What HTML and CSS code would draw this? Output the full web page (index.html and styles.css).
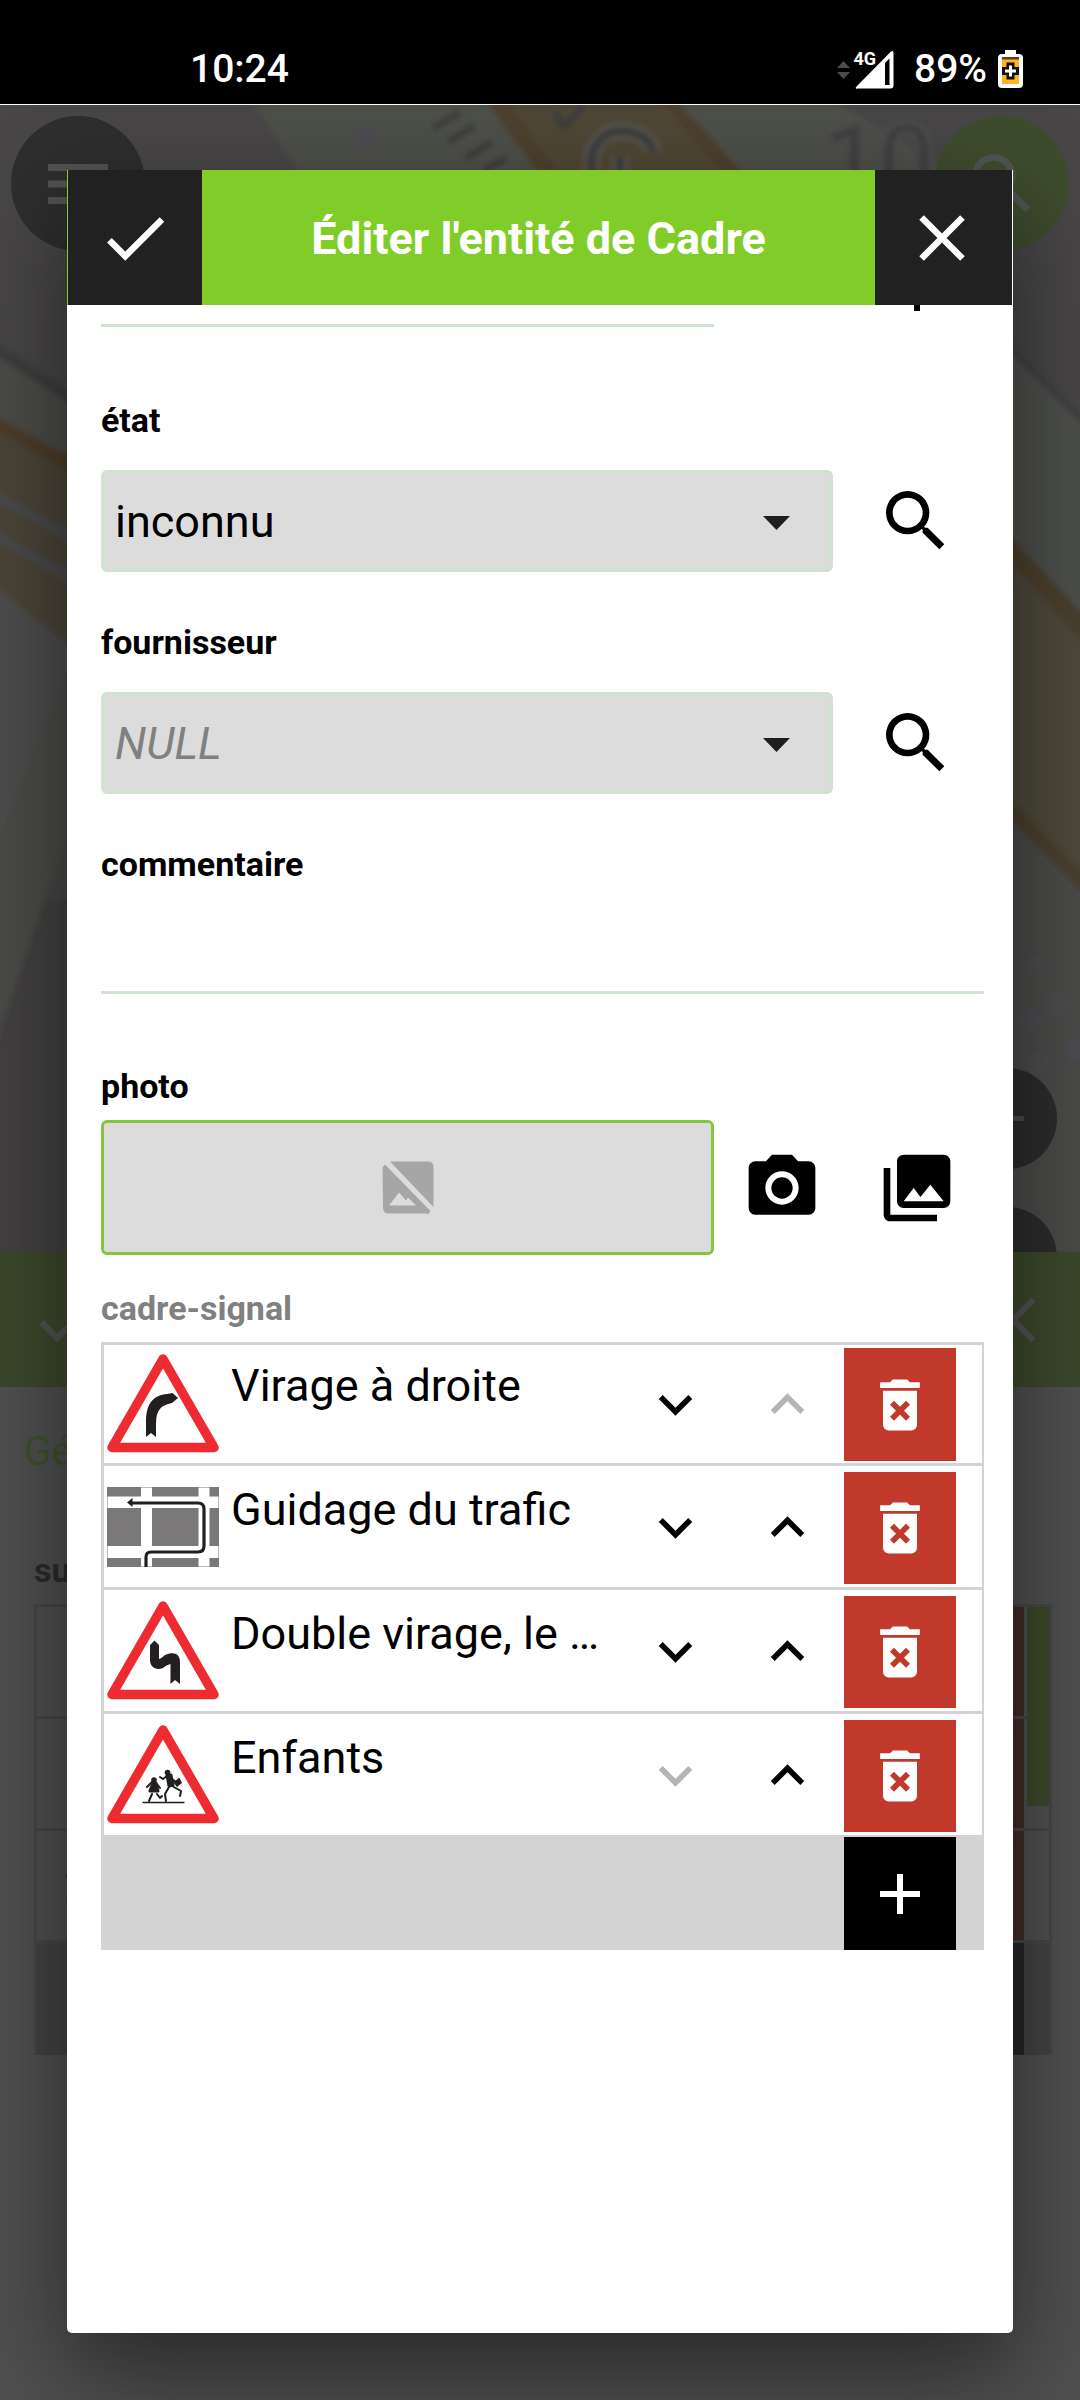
FILE: index.html
```html
<!DOCTYPE html>
<html lang="fr">
<head>
<meta charset="utf-8">
<title>Éditer l'entité de Cadre</title>
<link rel="stylesheet" href="styles.css">
</head>
<body>
<svg class="defs" width="0" height="0" aria-hidden="true">
  <symbol id="search" viewBox="0 0 24 24"><path d="M15.5 14h-.79l-.28-.27A6.47 6.47 0 0 0 16 9.5 6.5 6.5 0 1 0 9.5 16c1.61 0 3.09-.59 4.23-1.57l.27.28v.79l5 4.99L20.49 19l-4.99-5zm-6 0C7.01 14 5 11.99 5 9.5S7.01 5 9.5 5 14 7.01 14 9.5 11.99 14 9.5 14z"/></symbol>
  <symbol id="down" viewBox="0 0 24 24"><path d="M16.59 8.59 12 13.17 7.41 8.59 6 10l6 6 6-6z"/></symbol>
  <symbol id="up" viewBox="0 0 24 24"><path d="M12 8l-6 6 1.41 1.41L12 10.83l4.59 4.58L18 14z"/></symbol>
  <symbol id="trash" viewBox="0 0 24 24"><path d="M6 19a2 2 0 0 0 2 2h8a2 2 0 0 0 2-2V7H6v12zm2.46-7.12 1.41-1.41L12 12.59l2.12-2.12 1.41 1.41L13.41 14l2.12 2.12-1.41 1.41L12 15.41l-2.12 2.12-1.41-1.41L10.59 14l-2.13-2.12zM15.5 4l-1-1h-5l-1 1H5v2h14V4z"/></symbol>
  <symbol id="check" viewBox="0 0 24 24"><path d="M9 16.17 4.83 12l-1.42 1.41L9 19 21 7l-1.41-1.41z"/></symbol>
  <symbol id="close" viewBox="0 0 24 24"><path d="M19 6.41 17.59 5 12 10.59 6.41 5 5 6.41 10.59 12 5 17.59 6.41 19 12 13.41 17.59 19 19 17.59 13.41 12z"/></symbol>
  <symbol id="warning" viewBox="0 0 112 99"><path d="M56 5 107 93.500H5z" fill="#fff" stroke="#ed2b30" stroke-width="9.500" stroke-linejoin="round"/></symbol>
</svg>

<header class="status">
  <span class="clock">10:24</span>
  <div class="indicators">
    <svg width="57" height="40" viewBox="0 0 57 40">
      <path d="M0 18l6.500-7 6.500 7zM0 22l6.500 7 6.500-7z" fill="#4b4b4b"/>
      <text class="network" x="16.500" y="15">4G</text>
      <path d="M19 39Q18 37.500 20 36L54 1.500Q56.500 0 56.500 3V35.500Q56.500 38.500 53.500 38.500H20z" fill="#fff"/>
      <path d="M48 13l4.500-4.500V35H48z" fill="#000"/>
    </svg>
    <span class="percent">89%</span>
    <svg width="25" height="38" viewBox="0 0 25 38">
      <path d="M7 0h11v4h3q4 0 4 4v26q0 4-4 4H4q-4 0-4-4V8q0-4 4-4h3z" fill="#fff"/>
      <path d="M4 7h17v27H4z" fill="#ffb324"/><path d="M4 7h17v2.500H4z" fill="#5d430f"/>
      <path d="M8.500 12.500h8v4.500H21v8h-4.500v4.500h-8V25H4v-8h4.500z" fill="#111"/>
      <path d="M11 15.500h3v4h4v3h-4v4h-3v-4H7v-3h4z" fill="#fff"/>
    </svg>
  </div>
</header>

<main class="app">
  <section class="map">
    <svg class="tiles" width="1080" height="1147" viewBox="0 105 1080 1147">
      <defs><filter id="soft"><feGaussianBlur stdDeviation="2.500"/></filter></defs>
      <rect y="105" width="1080" height="1147" fill="#484646"/>
      <path d="M0 900H80V1252H0z" fill="#434141"/>
      <g filter="url(#soft)">
        <path d="M245 90 L300 175 H960 L815 90z" fill="#4e4f49"/>
        <path d="M478 90 L540 175 H745 L667 90z" fill="#504736"/>
        <path d="M478 90 L540 175 H560 L500 90zM667 90 745 175H725L650 90z" fill="#4e412d"/>
        <path d="M-10 338 80 398V412L-10 352z" fill="#3d3d3f"/>
        <path d="M-10 352 80 410V470L-10 415z" fill="#4b4c47"/>
        <path d="M-10 413 80 462V655L-10 582z" fill="#4c4537"/>
        <path d="M-10 413 80 462V478L-10 427z" fill="#4d3e2a"/>
        <path d="M-10 493 80 542M-10 533 80 583" stroke="#4a4b4d" stroke-width="8"/>
        <path d="M-10 582 80 655 67 680 -10 860z" fill="#4d4d4e"/>
        <path d="M80 640-10 860V1060L80 800z" fill="#4b4c46"/>
        <path d="M1000 340 1090 430V630L1000 530z" fill="#4e4f4b"/>
        <path d="M1000 525 1090 622V880L1000 795z" fill="#4e483a"/>
        <path d="M1000 525 1090 622V650L1000 550zM1000 790 1090 880V900L1000 810z" fill="#4c3f2e"/>
        <path d="M1000 810 1090 900V1252H1000z" fill="#4b4c48"/>
        <path d="M1000 338 1090 428" stroke="#404043" stroke-width="6"/>
        <g fill="#4e4e51"><circle cx="365" cy="137" r="12"/><circle cx="1035" cy="965" r="10"/><circle cx="1056" cy="1004" r="12"/><circle cx="1030" cy="1020" r="11"/><circle cx="1039" cy="1063" r="11"/><circle cx="1076" cy="1050" r="11"/></g>
        <path d="M433 128l28-16M448 142l26-16M466 158l26-16M482 172l24-14M554 112l10 14 20-20" stroke="#3c3d3e" stroke-width="7" fill="none"/>
        <path d="M592 172C588 146 603 130 624 131 641 132 652 142 653 152M620 157v20" stroke="#56544e" stroke-width="17" fill="none"/>
        <path d="M592 172C588 146 603 130 624 131 641 132 652 142 653 152M620 157v20" stroke="#3c3c3c" stroke-width="8" fill="none"/>
      </g>
      <text class="house-number" x="824" y="195" filter="url(#soft)">10</text>
    </svg>
    <div class="fab menu"><svg width="60" height="40" viewBox="0 0 60 40"><path d="M0 0h60v7H0zM0 16.500h60v7H0zM0 33h60v7H0z" fill="#525252"/></svg></div>
    <div class="fab find"><svg width="80" height="80"><use href="#search"/></svg></div>
    <div class="fab minus"><svg width="34" height="5"><path d="M0 0h34v5H0z" fill="#4b4b4b"/></svg></div>
    <div class="fab lower"></div>
  </section>
  <section class="sheet">
    <div class="sheet-bar">
      <svg width="78" height="78"><use href="#check"/></svg>
      <svg width="78" height="78"><use href="#close"/></svg>
    </div>
    <p class="tab">Gé</p>
    <p class="sheet-label">su</p>
    <div class="sheet-list">
      <div class="sheet-row"><span>1</span><i></i></div>
      <div class="sheet-row"><span>1</span><i></i></div>
      <div class="sheet-row"><span>2</span><i></i></div>
      <div class="sheet-foot"><i></i></div>
      <div class="scrollbar"></div>
    </div>
  </section>

  <section class="dialog">
    <div class="title-bar">
      <button class="bar-button"><svg width="78" height="78"><use href="#check"/></svg></button>
      <h1>Éditer l'entité de Cadre</h1>
      <button class="bar-button"><svg width="78" height="78"><use href="#close"/></svg></button>
    </div>
    <div class="form">
      <div class="previous"><div class="underline"></div><div class="stem"></div></div>
      <div class="field">
        <label>état</label>
        <div class="control"><div class="select"><span>inconnu</span><svg width="27" height="14" viewBox="0 0 27 14"><path d="M0 0h27L13.500 14z" fill="#1e1e1e"/></svg></div><svg class="lookup" width="80" height="80"><use href="#search"/></svg></div>
      </div>
      <div class="field">
        <label>fournisseur</label>
        <div class="control"><div class="select null"><span>NULL</span><svg width="27" height="14" viewBox="0 0 27 14"><path d="M0 0h27L13.500 14z" fill="#1e1e1e"/></svg></div><svg class="lookup" width="80" height="80"><use href="#search"/></svg></div>
      </div>
      <div class="field">
        <label>commentaire</label>
        <div class="text-input"></div>
      </div>
      <div class="field photo">
        <label>photo</label>
        <div class="control">
          <div class="preview"><svg width="52" height="54" viewBox="0 0 52 54" fill="#a6a6a6"><path d="M8 0.500H46Q51.500 0.500 51.500 6V46z"/><path d="M0.500 6.500 3 3.500 48.500 50 46 53.500 44.500 52.500H7Q1 52.500 1 47z"/><path d="M7 44.500 17 31.500l7 8 2-3 8 8z" fill="#dcdcdc"/></svg></div>
          <svg class="camera" width="80" height="80" viewBox="0 0 24 24"><circle cx="12" cy="12" r="3.200"/><path d="M9 2 7.170 4H4c-1.100 0-2 .9-2 2v12c0 1.100.9 2 2 2h16c1.100 0 2-.9 2-2V6c0-1.100-.9-2-2-2h-3.170L15 2H9zm3 15c-2.760 0-5-2.240-5-5s2.240-5 5-5 5 2.240 5 5-2.240 5-5 5z"/></svg>
          <svg class="gallery" width="80" height="80" viewBox="0 0 24 24"><path d="M22 16V4c0-1.100-.9-2-2-2H8c-1.100 0-2 .9-2 2v12c0 1.100.9 2 2 2h12c1.100 0 2-.9 2-2zm-11-4 2.030 2.710L16 11l4 5H8l3-4zM2 6v14c0 1.100.9 2 2 2h14v-2H4V6H2z"/></svg>
        </div>
      </div>
      <div class="relation">
        <label>cadre-signal</label>
        <ul>
          <li>
            <svg class="sign" width="112" height="99" viewBox="0 0 112 99"><use href="#warning"/><path d="M39 83V68C39 49 47 41 60 40L65.500 39 71 44 65 49C54 51 49 56 49 70V83L44 79z" fill="#231f20"/></svg>
            <span class="name">Virage à droite</span>
            <svg class="arrow" width="67" height="67"><use href="#down"/></svg><svg class="arrow off" width="67" height="67"><use href="#up"/></svg>
            <button><svg width="68" height="68"><use href="#trash"/></svg></button>
          </li>
          <li>
            <svg class="sign" width="112" height="80" viewBox="0 0 112 80"><path d="M.5.5h111v79H.5z" fill="#fff" stroke="#bbb"/><path d="M0 0h34v9.500H0zM45 0h46.500v9.500H45zM102.500 0H112v9.500h-9.500zM0 21h34v38H0zM45 21h46.500v38H45zM102.500 21H112v38h-9.500zM0 71h34v9H0zM45 71h46.500v9H45zM102.500 71H112v9h-9.500z" fill="#7b7879"/><path d="M39 80V70Q39 65 44 65H91Q97 65 97 59V22Q97 16 91 16H25" fill="none" stroke="#231f20" stroke-width="3.200"/><path d="M20 15.500 25.500 11V20z" fill="#231f20"/></svg>
            <span class="name">Guidage du trafic</span>
            <svg class="arrow" width="67" height="67"><use href="#down"/></svg><svg class="arrow" width="67" height="67"><use href="#up"/></svg>
            <button><svg width="68" height="68"><use href="#trash"/></svg></button>
          </li>
          <li>
            <svg class="sign" width="112" height="99" viewBox="0 0 112 99"><use href="#warning"/><path d="M43 44 47.500 39.500 52 44V58Q55 57 58 54C67 50 73 53 73 61V83L68 79 63.500 83V63Q59 64 56 67C49 70 43 66 43 59z" fill="#231f20"/></svg>
            <span class="name">Double virage, le …</span>
            <svg class="arrow" width="67" height="67"><use href="#down"/></svg><svg class="arrow" width="67" height="67"><use href="#up"/></svg>
            <button><svg width="68" height="68"><use href="#trash"/></svg></button>
          </li>
          <li>
            <svg class="sign" width="112" height="99" viewBox="0 0 112 99"><use href="#warning"/><g stroke="#231f20" fill="none" stroke-linecap="round" stroke-linejoin="round"><path d="M36 77.500H77" stroke-width="1.300"/><path d="M46 58 43 66H51L49 58zM60 50 62 61 66 60 64 50z" stroke-width="3" fill="#231f20"/><path d="M45 57 40 62M50 59 53 63M50 69 53 73 55 71M45 69 42 76M60 51 56 54 53 52M65 54 69 57 72 54M65 61 74 66 73 71M62 62 58 69 59 76" stroke-width="2"/></g><circle cx="47" cy="55" r="2.800" fill="#231f20"/><circle cx="60.500" cy="47.500" r="2.800" fill="#231f20"/><path d="M66 57l7-3 2 4-5 4z" fill="#231f20"/></svg>
            <span class="name">Enfants</span>
            <svg class="arrow off" width="67" height="67"><use href="#down"/></svg><svg class="arrow" width="67" height="67"><use href="#up"/></svg>
            <button><svg width="68" height="68"><use href="#trash"/></svg></button>
          </li>
        </ul>
        <div class="list-foot"><button><svg width="40" height="40" viewBox="0 0 40 40"><path d="M17 0h6v17h17v6H23v17h-6V23H0v-6h17z"/></svg></button></div>
      </div>
    </div>
  </section>
</main>
</body>
</html>
```
FILE: styles.css
```css
* { box-sizing: border-box; }
body {
  margin: 0;
  width: 1080px;
  height: 2400px;
  overflow: hidden;
  font-family: Roboto, sans-serif;
  color: #000;
  background: #505050;
}
svg { display: block; flex: none; overflow: visible; }
button { border: 0; padding: 0; display: flex; align-items: center; justify-content: center; }
p { margin: 0; }
.defs { position: absolute; }

/* Status bar */
.status {
  height: 105px;
  background: #000;
  border-bottom: 1px solid #fff;
  display: flex;
  justify-content: space-between;
  padding: 45px 57px 0 190px;
  color: #fff;
  font-size: 39px;
  font-weight: 500;
  line-height: 48px;
}
.indicators { display: flex; align-items: flex-start; }
.indicators svg { margin-top: 5px; }
.percent { width: 71px; margin: 0 13px 0 20px; white-space: nowrap; }
.network { font-size: 18px; font-weight: 700; fill: #fff; }

/* Dimmed application behind the dialog */
.app { position: relative; height: 2295px; }
.map { position: relative; height: 1147px; overflow: hidden; }
.tiles { position: absolute; }
.house-number { font-size: 98px; fill: #404040; stroke: #4f4e4e; stroke-width: 8px; paint-order: stroke; }
.fab {
  position: absolute;
  display: flex;
  align-items: center;
  justify-content: center;
  border-radius: 50%;
  background: #2e2e2e;
}
.menu { left: 11px; top: 11px; width: 134px; height: 135px; }
.find { right: 11px; top: 11px; width: 134px; height: 135px; background: #3e4c2e; fill: #505453; }
.minus { left: 957px; top: 963px; width: 100px; height: 101px; background: #2c2c2c; }
.lower { left: 957px; top: 1102px; width: 100px; height: 101px; background: #2c2c2c; }
.sheet-bar {
  height: 135px;
  padding: 0 28px;
  display: flex;
  align-items: center;
  justify-content: space-between;
  background: #3c492c;
  fill: #525252;
}
.tab { height: 150px; padding: 42px 24px 0; font-size: 40px; line-height: 46px; color: #3f512b; }
.sheet-label { height: 67px; padding: 12px 34px 0; font-size: 34px; font-weight: 700; line-height: 42px; color: #2b2b2b; }
.sheet-list {
  position: relative;
  width: 1018px;
  margin-left: 34px;
  border: 3px solid #474747;
  border-bottom: 0;
}
.sheet-row {
  height: 112px;
  display: flex;
  justify-content: space-between;
  padding: 0 25px 0 27px;
  border-bottom: 3px solid #474747;
  color: #2a2a2a;
  font-size: 45px;
  line-height: 52px;
}
.sheet-row span { padding-top: 28px; }
.sheet-row i { width: 112px; background: #402c29; }
.sheet-foot { height: 112px; background: #434343; display: flex; justify-content: flex-end; padding-right: 25px; }
.sheet-foot i { width: 112px; background: #262626; }
.scrollbar { position: absolute; right: 0; top: 0; width: 22px; height: 199px; background: #3c492c; }

/* Dialog */
.dialog {
  position: absolute;
  left: 67px;
  top: 65px;
  width: 946px;
  height: 2163px;
  background: #fff;
  border-radius: 0 0 5px 5px;
  box-shadow: 0 40px 100px rgba(0, 0, 0, .5);
}
.title-bar {
  height: 135px;
  display: flex;
  background: #80cc28;
  border-left: 1px solid #80cc28;
  border-right: 1px solid #fff;
}
.title-bar h1 {
  flex: 1;
  margin: 0;
  color: #fff;
  text-align: center;
  font-size: 45px;
  font-weight: 700;
  line-height: 137px;
}
.bar-button { width: 134px; background: #212121; fill: #fff; }
.bar-button:last-child { width: 137px; padding-right: 3px; }
.form { padding: 0 29px 0 34px; }
.previous { height: 94px; display: flex; justify-content: space-between; }
.underline { width: 613px; height: 22px; border-bottom: 3px solid #cde4cf; }
.stem { width: 6px; height: 6px; margin-right: 64px; background: #000; }
label { display: block; font-size: 34px; font-weight: 700; line-height: 42px; }
.field { height: 222px; }
.control { display: flex; align-items: center; }
.field .control { margin-top: 29px; }
.select {
  width: 732px;
  height: 102px;
  border: 3px solid #cde4cf;
  border-radius: 6px;
  background: #dcdcdc;
  padding: 0 40px 0 11px;
  display: flex;
  align-items: center;
  justify-content: space-between;
  font-size: 45px;
}
.select svg { margin-top: 3px; }
.null span { color: #808080; font-style: italic; }
.lookup { margin-left: 43px; }
.text-input { height: 110px; margin-top: -1px; border-bottom: 3px solid #cde4cf; }
.photo .control { margin-top: 13px; }
.preview {
  width: 613px;
  height: 135px;
  border: 3px solid #86c440;
  border-radius: 6px;
  background: #dcdcdc;
  display: flex;
  align-items: center;
  justify-content: center;
}
.camera { margin-left: 28px; }
.gallery { margin-left: 55px; }

/* Related entities */
.relation label { color: #808080; }
.relation ul {
  list-style: none;
  margin: 13px 0 0;
  padding: 0;
  border: 3px solid #d3d3d3;
  border-width: 3px 2px 0 3px;
}
.relation li {
  height: 124px;
  padding-left: 3px;
  display: grid;
  grid-template-columns: 112px 400px 112px 113px 112px;
  align-items: center;
  justify-items: center;
  border-bottom: 3px solid #d3d3d3;
}
.relation li:first-child { height: 121px; }
.relation li:first-child .sign { margin-top: -2px; }
.name {
  width: 100%;
  align-self: start;
  padding: 18px 0 0 12px;
  font-size: 45px;
  line-height: 52px;
  white-space: nowrap;
}
.relation li:first-child .name { padding-top: 15px; }
.relation li:first-child button { height: 113px; margin-top: 1px; }
.relation li:first-child .arrow { margin-top: 0; }
.arrow { margin-top: 2px; }
.off { fill: #b5b5b5; }
.relation button { width: 112px; height: 112px; margin-top: 3px; background: #c0392b; fill: #fff; }
.list-foot { height: 112px; display: flex; justify-content: flex-end; padding-right: 28px; background: #d3d3d3; }
.relation .list-foot button { height: 113px; margin-top: -1px; background: #000; }
```
